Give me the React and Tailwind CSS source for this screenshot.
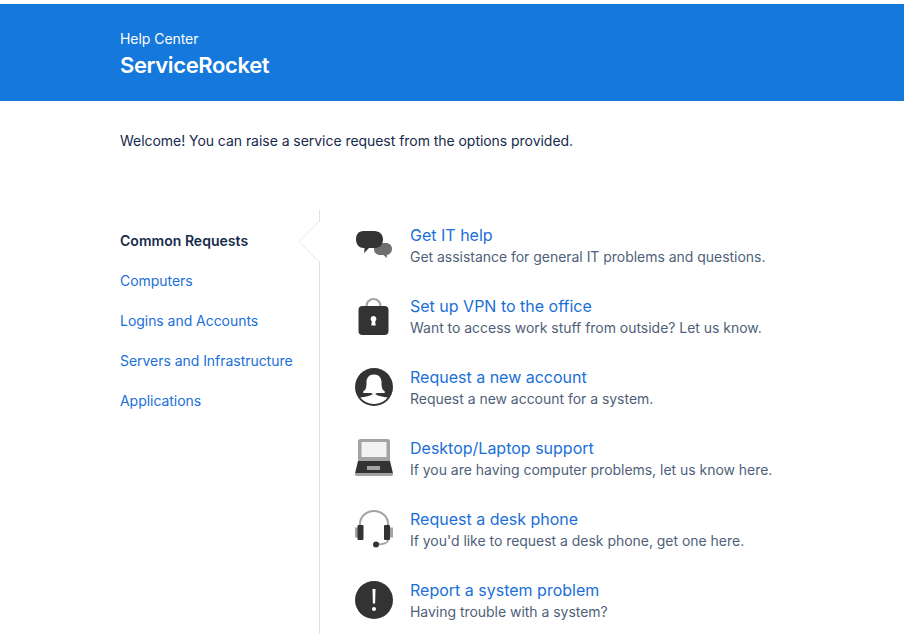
const Chat = () => (
  <svg width="40" height="40" viewBox="0 0 40 40">
    <path d="M26 19h6c3.500 0 6 2.500 6 6 0 3-2.200 5.500-5 6l-.5 3-3-3h-3.500c-3.500 0-6-2.500-6-6s2.500-6 6-6z" fill="#707070" />
    <path d="M9.500 7h11c5 0 8.500 3.500 8.500 8.500S25.500 24 20.500 24h-5.500l-4.800 5 .3-5h-1C5.500 24 2 20.500 2 15.500S4.500 7 9.500 7z" fill="#333" />
  </svg>
);
const Lock = () => (
  <svg width="40" height="40" viewBox="0 0 40 40">
    <path d="M12.500 15V11a7 7 0 0 1 14 0V15" fill="none" stroke="#a3a3a3" strokeWidth="2.200" />
    <rect x="4.500" y="11" width="30" height="29" rx="4" fill="#333" />
    <path d="M19.500 21a3 3 0 0 1 1.700 5.400l.5 4.100h-4.400l.5-4.100a3 3 0 0 1 1.700-5.400z" fill="#fff" />
  </svg>
);
const Person = () => (
  <svg width="40" height="40" viewBox="0 0 40 40">
    <circle cx="20" cy="21" r="19" fill="#333" />
    <path d="M20 8.500c5 0 7.500 3.500 7.500 8 0 3 .3 5.500 1.200 7 .6 1 2.300 1.500 2.300 3.200-3.500.8-7-.3-9 .8l-2 1.500-2-1.500c-2-1.100-5.500 0-9-.8 0-1.700 1.700-2.200 2.300-3.200.9-1.500 1.200-4 1.200-7 0-4.500 2.500-8 7.500-8z" fill="#fff" />
    <path d="M6.300 31.500c5-.3 9.500-1.500 13.700-4 4.200 2.500 8.700 3.700 13.700 4A17 17 0 0 1 20 38a17 17 0 0 1-13.700-6.500z" fill="#fff" />
  </svg>
);
const Laptop = () => (
  <svg width="40" height="40" viewBox="0 0 40 40">
    <path d="M4 25V4.500A2.500 2.500 0 0 1 6.500 2h27A2.500 2.500 0 0 1 36 4.500V25z" fill="#a3a3a3" />
    <rect x="7.500" y="5" width="25" height="15" fill="#f2f2f2" />
    <path d="M4 24h32l3 12.500H1z" fill="#333" />
    <rect x="1" y="36" width="38" height="3" rx="1.500" fill="#a3a3a3" />
    <rect x="13" y="29" width="13" height="4" fill="#a3a3a3" />
  </svg>
);
const Headset = () => (
  <svg width="40" height="40" viewBox="0 0 40 40">
    <path d="M6 18v-2a14 13 0 0 1 28 0v2" fill="none" stroke="#a3a3a3" strokeWidth="2" />
    <rect x="1" y="19.500" width="3" height="10" fill="#a3a3a3" />
    <rect x="36" y="19.500" width="3" height="10" fill="#a3a3a3" />
    <rect x="3.500" y="17" width="6" height="15" rx="1" fill="#333" />
    <rect x="30" y="17" width="6" height="15" rx="1" fill="#333" />
    <path d="M34 32c0 2.500-3 3.500-6 4l-6 .5" fill="none" stroke="#a3a3a3" strokeWidth="1.800" />
    <circle cx="22" cy="36.500" r="3" fill="#333" />
  </svg>
);
const Alert = () => (
  <svg width="40" height="40" viewBox="0 0 40 40">
    <circle cx="20" cy="21" r="19" fill="#333" />
    <path d="M18.500 10h3l-.4 14.500h-2.200z" fill="#fff" />
    <circle cx="20" cy="30" r="2" fill="#fff" />
  </svg>
);

const requests = [
  [Chat, "Get IT help", "Get assistance for general IT problems and questions."],
  [Lock, "Set up VPN to the office", "Want to access work stuff from outside? Let us know."],
  [Person, "Request a new account", "Request a new account for a system."],
  [Laptop, "Desktop/Laptop support", "If you are having computer problems, let us know here."],
  [Headset, "Request a desk phone", "If you'd like to request a desk phone, get one here."],
  [Alert, "Report a system problem", "Having trouble with a system?"],
];
const groups = ["Computers", "Logins and Accounts", "Servers and Infrastructure", "Applications"];

export default function App() {
  return (
    <div className="h-[634px] w-[904px] overflow-hidden bg-white pt-1 font-['Inter',sans-serif] text-[14px] text-[#172b4d]">
      <header className="h-[97px] bg-[#1478dd] pl-[120px] pt-[27px] text-white">
        <div className="text-[14px] leading-4 tracking-[-0.05px]">Help Center</div>
        <div className="mt-[4px] text-[22px] font-semibold leading-7 tracking-[-0.37px]">ServiceRocket</div>
      </header>
      <p className="ml-[120px] mt-[30px] text-[14px] leading-5 tracking-[-0.045px]">Welcome! You can raise a service request from the options provided.</p>
      <div className="ml-[120px] mt-[59px] flex">
        <nav className="relative h-[424px] w-[200px] border-r border-[#dfe1e6] pt-[10px]">
          <div className="flex h-10 items-center text-[14px] font-semibold tracking-[0.03px]">Common Requests</div>
          {groups.map((g) => (
            <div key={g} className="flex h-10 items-center text-[14px] tracking-[-0.04px] text-[#1a6fd8]">{g}</div>
          ))}
          <svg className="absolute -right-px top-[11px]" width="22" height="42" viewBox="0 0 22 42">
            <path d="M21 0 L1 20.500 L21 41" fill="#fff" stroke="#e6e8ec" strokeWidth="1" />
            <rect x="21" y="1" width="1" height="39.500" fill="#fff" />
          </svg>
        </nav>
        <div className="flex flex-col pl-[34px] pt-[13px]">
          {requests.map(([Icon, title, desc]) => (
            <div key={title} className="flex h-[71px] items-start">
              <div className="mt-[1px] h-10 w-10 shrink-0"><Icon /></div>
              <div className="ml-[16px]">
                <div className="text-[16px] leading-6 text-[#1a6fd8]">{title}</div>
                <div className="text-[14px] leading-5 tracking-[-0.03px] text-[#505f79]">{desc}</div>
              </div>
            </div>
          ))}
        </div>
      </div>
    </div>
  );
}
